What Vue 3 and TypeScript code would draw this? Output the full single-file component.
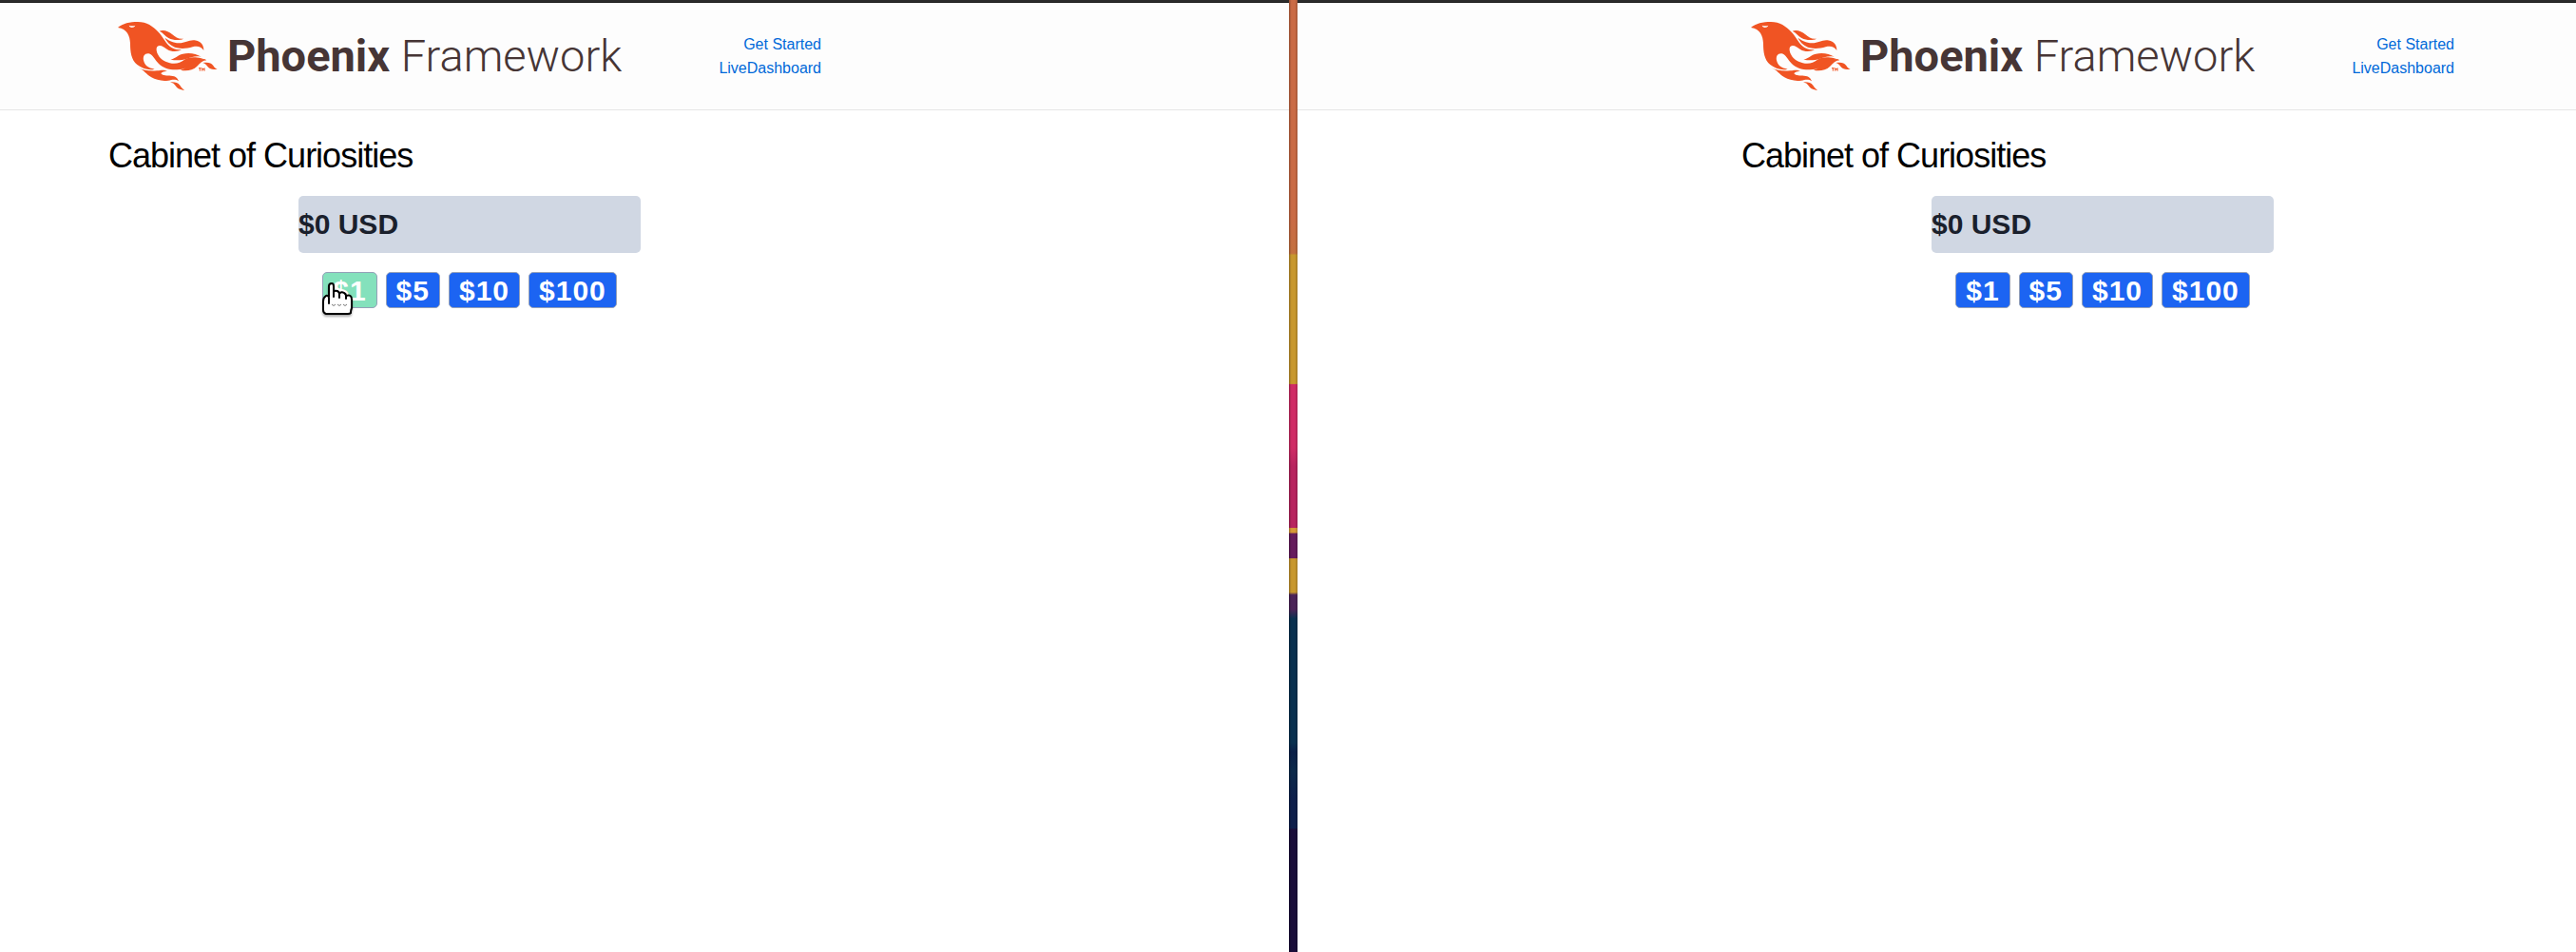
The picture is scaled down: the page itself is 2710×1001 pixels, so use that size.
<script setup lang="ts">
interface Pane {
  id: string
  hovered: boolean
}

const panes: Pane[] = [
  { id: 'left', hovered: true },
  { id: 'right', hovered: false },
]

const amounts: number[] = [1, 5, 10, 100]
</script>

<template>
  <div class="desktop">
    <div v-for="pane in panes" :key="pane.id" class="window" :class="pane.id">
      <div class="chrome"></div>
      <header>
        <div class="container bar">
          <a href="#" class="logo" aria-label="Phoenix Framework">
            <svg class="bird" viewBox="0 0 324 228" aria-hidden="true">
              <g fill="#f05423" transform="translate(-36 -33)">
                <path fill-rule="evenodd" d="M42 57C57 44 80 39 105 39C133 39 153 53 170 71C185 87 194 109 211 120C222 126 233 127 243 127C230 134 211 134 198 126C188 119 181 113 172 114C162 116 162 128 168 141C177 160 194 167 213 170C229 172 241 166 251 159C260 152 279 147 305 154C316 157 320 158 321 160C304 156 293 160 283 168C268 181 252 189 229 190C203 191 185 184 171 171C158 159 153 142 139 139C126 138 121 148 123 160C126 175 137 185 158 188C139 193 118 186 103 174C84 159 81 132 81 107C80 83 71 61 42 57ZM77 50C80 59 93 59 97 50C91 52 84 52 77 50Z"/>
                <path d="M173 68C187 63 202 69 214 79C225 88 233 94 249 92C235 99 216 97 202 90C190 84 185 73 173 68Z"/>
                <path d="M190 89C202 97 216 105 235 106C255 106 267 95 284 97C304 100 313 112 313 129C304 116 293 115 278 118C263 122 247 125 228 121C211 116 199 106 190 89Z"/>
                <path d="M208 158C223 155 230 144 247 140C269 135 290 140 305 149C287 146 275 150 260 155C243 161 226 161 208 158Z"/>
                <path d="M240 191C256 187 262 174 276 165C289 156 305 155 322 160C307 161 302 170 291 180C278 192 258 195 240 191Z"/>
                <path d="M309 168C324 166 336 166 343 177C347 184 351 187 356 188C342 190 333 189 326 181C321 174 317 169 309 168Z"/>
                <path d="M106 184C126 193 143 195 166 193C181 191 187 189 198 195C188 194 180 197 178 202C184 210 197 208 210 209C224 210 231 216 234 226C222 218 213 222 201 224C181 227 162 222 148 214C131 205 125 190 106 184Z"/>
                <path d="M207 229C221 228 231 230 238 239C244 248 248 251 252 255C238 252 232 251 226 243C220 235 216 231 207 229Z"/>
                <path fill="none" stroke="#f05423" stroke-width="3" d="M297 185H305M301 185V194M308 194V185L312 190L315 185V194"/>
              </g>
            </svg>
            <span class="wordmark"><b>Phoenix</b> <span>Framework</span></span>
          </a>
          <nav>
            <a href="#">Get Started</a>
            <a href="#">LiveDashboard</a>
          </nav>
        </div>
      </header>
      <main class="container">
        <h1>Cabinet of Curiosities</h1>
        <div class="cabinet">
          <div class="total">$0 USD</div>
          <div class="coins">
            <div v-for="(amount, i) in amounts" :key="amount" class="coin">
              <button type="button" :class="{ hovered: pane.hovered && i === 0 }">${{ amount }}</button>
              <svg v-if="pane.hovered && i === 0" class="pointer" viewBox="0 0 36 38" aria-hidden="true">
                <path d="M8 17V6Q8 3 11 3Q13 3 13 6V12Q14 10 17 11Q19 12 19 14Q21 11 24 13Q26 14 26 16Q32 14 32 20V29Q31 31 31 34Q30 35 28 35H5Q2 34 2 31V22Q2 18 5 16Q7 15 8 18V24" fill="#fff" stroke="#000" stroke-width="2" stroke-linejoin="round" stroke-linecap="round"/>
                <path d="M13 12V17M19 14V18M26 16V19" fill="none" stroke="#000" stroke-width="2" stroke-linecap="round"/>
                <path d="M11 25q2 3 4 0M17 25q2 3 4 0M23 25q2 3 4 0" fill="none" stroke="#777"/>
              </svg>
            </div>
          </div>
        </div>
      </main>
    </div>
    <div class="wallpaper"></div>
  </div>
</template>

<style>
body {
  margin: 0;
}
</style>

<style scoped>
.desktop {
  display: grid;
  grid-template-columns: 1356fr 9px 1345fr;
  min-height: 100vh;
  font-family: "Liberation Sans", Arial, sans-serif;
  font-size: 16px;
  color: #000;
}

.window {
  background: #fff;
  grid-row: 1;
}

.window.left {
  grid-column: 1;
}

.window.right {
  grid-column: 3;
}

.wallpaper {
  grid-column: 2;
  grid-row: 1;
  background:
    linear-gradient(90deg, #0004, #0000 30%, #0000 70%, #0003),
    linear-gradient(
      #ca6b45 0 23%,
      #c4713f 26.6%,
      #c8982e 26.8% 40.3%,
      #d02c66 40.4% 47%,
      #b8245f 49% 55.4%,
      #d89a38 55.5% 55.9%,
      #661c5d 56.1% 58.6%,
      #c8982e 58.7% 62.2%,
      #4c2458 62.5% 64%,
      #0a3150 65% 78%,
      #0b2048 79%,
      #0c2a4a 81%,
      #0e1f4b 84% 87%,
      #1a0e3a 87.1%
    );
}

.chrome {
  height: 2px;
  background: #2b2b2b;
  border-bottom: 1px solid #1a1a1a;
}

.container {
  box-sizing: border-box;
  width: 760px;
  max-width: 100%;
}

.left .container {
  margin-left: 114px;
}

.right .container {
  margin-left: auto;
  margin-right: 118px;
}

header {
  background: #fdfdfd;
  border-bottom: 1px solid #e6e6e6;
}

.bar {
  display: flex;
  justify-content: space-between;
  align-items: center;
  height: 112px;
  padding: 0 10px 0 8px;
}

.logo {
  display: flex;
  align-items: center;
  gap: 9px;
  text-decoration: none;
}

.bird {
  width: 108px;
  height: 76px;
}

.wordmark {
  color: #463535;
  font-family: Roboto, sans-serif;
  font-size: 47px;
  line-height: 60px;
  font-weight: 300;
  white-space: nowrap;
}

.wordmark b {
  font-weight: 700;
}

nav {
  display: flex;
  flex-direction: column;
  align-items: flex-end;
}

nav a {
  color: #0069d9;
  line-height: 25px;
  text-decoration: none;
}

h1 {
  margin: 26px 0 21px;
  font-size: 36px;
  line-height: 43px;
  font-weight: 400;
  letter-spacing: -1px;
}

.cabinet {
  width: 360px;
  margin: 0 auto;
}

.total {
  background: #d0d7e3;
  border-radius: 5px;
  color: #1a202c;
  font-size: 30px;
  font-weight: 700;
  line-height: 60px;
}

.coins {
  display: flex;
  justify-content: center;
  gap: 9px;
  margin-top: 20px;
}

.coin {
  position: relative;
}

button {
  display: block;
  height: 38px;
  padding: 2px 10px 0;
  border: 1px solid #94a0b8;
  border-radius: 5px;
  background: #1c64f2;
  color: #fff;
  font-family: inherit;
  font-size: 30px;
  font-weight: 700;
  line-height: 34px;
  letter-spacing: 1px;
  cursor: pointer;
}

button.hovered {
  background: #84e1bc;
}

.pointer {
  position: absolute;
  left: -1px;
  top: 9px;
  width: 36px;
  height: 38px;
  filter: drop-shadow(0 2px 1px #0005);
  pointer-events: none;
}
</style>
